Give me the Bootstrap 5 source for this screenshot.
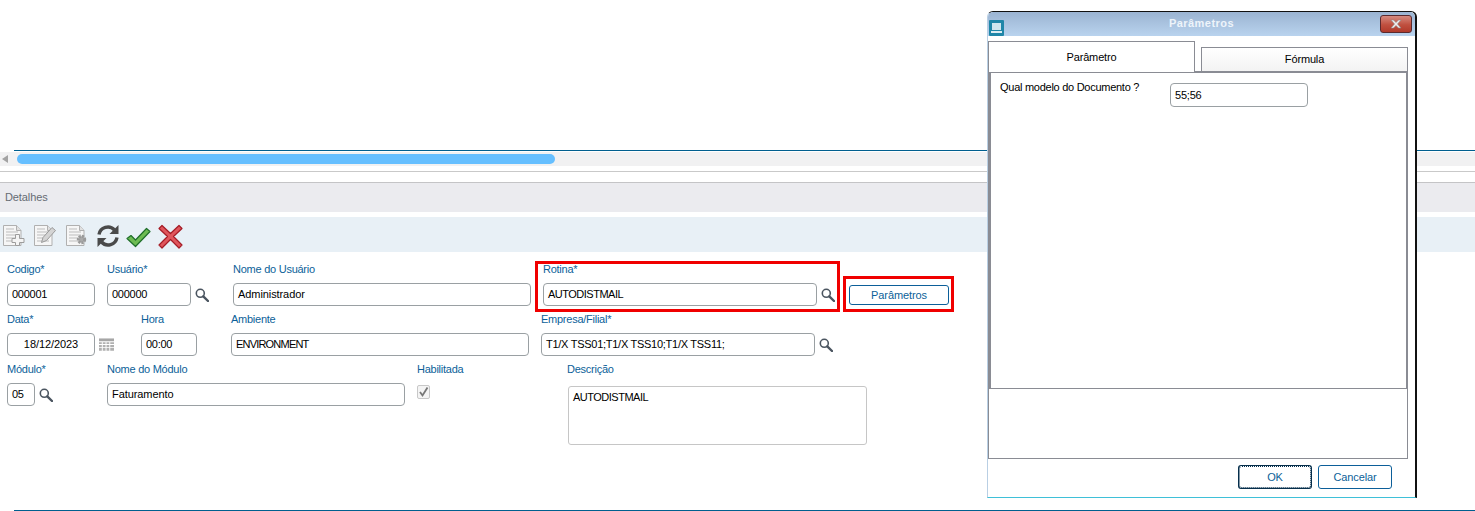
<!DOCTYPE html>
<html lang="pt">
<head>
<meta charset="utf-8">
<title>Detalhes</title>
<link rel="stylesheet" href="https://cdn.jsdelivr.net/npm/bootstrap@5.3.0/dist/css/bootstrap.min.css">
<style>
html,body{height:511px;overflow:hidden;background:#fff}
body{font-family:"Liberation Sans",Arial,sans-serif;font-size:11px;color:#000;position:relative}
.gap-top{height:150px}
.blue-rule{height:1px;margin-left:14px;background:#005f8f}
.scroll-track{height:14px;margin-top:1px;background:#f1f1f2;padding:2px 0 2px 17px;position:relative}
.scroll-arrow{position:absolute;left:2px;top:3px;width:0;height:0;border-style:solid;border-width:4px 6px 4px 0;border-color:transparent #a3a3a3 transparent transparent}
.scroll-thumb{width:538px;height:10px;background:#66bfff;border-radius:5px}
.grey-rule{height:1px;background:#c9c9c9;margin-top:5px}
.details-head{margin-top:10px;height:30px;background:#ebebef;border-top:1px solid #c4c4c6;color:#666b73;padding-left:5px;line-height:29px;letter-spacing:-.1px}
.tools{margin-top:5px;height:35px;background:#e8f0f6;padding:8px 0 0 3px}
.tools svg{display:block;flex:none}
.tool-gap1{margin-left:9px}.tool-gap2{margin-left:10px}.tool-gap3{margin-left:8px;margin-top:-1px}.tool-gap4{margin-left:6px;margin-top:2px}.tool-gap5{margin-left:7px;margin-top:-1px}
.form-zone{padding-top:9px;height:258px}
.frow{height:50px}
.fld{flex:none}
.fld-label{display:block;color:#0c5f99;height:22px;line-height:16px;white-space:nowrap;margin:0;letter-spacing:-.25px}
.fld-box{height:23px;border:1px solid #9aa0a3;border-radius:4px;background:#fff;padding:0 4px;line-height:21px;white-space:nowrap;color:#000;font-size:11px;width:100%;display:block;letter-spacing:-.27px}
.fld-line{display:flex;align-items:center}
.fld-line svg{flex:none}
.mag{margin-left:4px}
.w88{width:88px}.w84{width:84px}.w28{width:28px}
.tight-a{letter-spacing:-.5px}
.tight-b{letter-spacing:-.8px}
.tight-c{letter-spacing:-.08px}
.f-codigo{margin-left:7px;width:88px}
.f-usuario{margin-left:12px;width:104px}
.f-nome{margin-left:22px;width:298px}
.f-rotina{margin-left:12px;width:296px}
.rot-box{width:274px}
.f-btn{margin-left:10px;padding-top:24px}
.param-btn{width:100px;height:20px;padding:0;font-size:11px;line-height:18px;color:#0c5f99;background:#fff;border:1px solid #0c5f99;border-radius:3px;display:block;letter-spacing:-.1px}
.f-data{margin-left:7px;width:107px}
.f-hora{margin-left:27px;width:56px}
.f-amb{margin-left:34px;width:298px}
.f-emp{margin-left:12px;width:296px}
.f-mod{margin-left:7px;width:48px}
.f-nmod{margin-left:52px;width:298px}
.f-hab{margin-left:12px;width:100px}
.f-desc{margin-left:50px;width:300px}
.center-val{text-align:center}
.tick-box{width:13px;height:14px;border:1px solid #c8c8c8;background:#f4f4f4;border-radius:2px;display:block;margin-top:2px}
.desc-box{height:59px;border:1px solid #c6c6c6;border-radius:3px;padding:4px;margin-top:3px;line-height:13px;width:299px;margin-left:1px;letter-spacing:-.5px}
.end-rule{position:absolute;left:14px;right:0;top:510px;height:1px;background:#005f8f}
.hl{position:absolute;border:3px solid #f00000;pointer-events:none}
.hl-a{left:535px;top:261px;width:305px;height:51px}
.hl-b{left:843px;top:276px;width:111px;height:36px}
.dlg{position:absolute;left:987px;top:11px;width:430px;height:487px;background:#fff;border:solid #111;border-width:1px 2px 0 0;border-top-left-radius:6px;border-top-right-radius:6px;border-bottom:1px solid #3fc0d8;border-left:1px solid #b9cfe4}
.dlg-title{height:24px;background:linear-gradient(#9bb4d2,#b9d3ee);border-top-left-radius:5px;border-top-right-radius:5px;position:relative;text-align:center;color:#eef4fa;font-weight:700;line-height:23px;letter-spacing:.45px}
.dlg-ico{position:absolute;left:1px;top:8px;width:15px;height:16px;background:#1f86a8;border-radius:1px}
.dlg-ico i{position:absolute;left:3px;top:3px;width:9px;height:7px;background:#cfe6ef;display:block}
.dlg-ico b{position:absolute;left:2px;top:11px;width:11px;height:2px;background:#dcecf2;display:block}
.dlg-x{position:absolute;right:3px;top:3px;width:32px;height:18px;border:1px solid #5a2a2e;border-radius:3px;background:linear-gradient(#d58a80,#c0503f 55%,#b03a2b);display:flex;align-items:center;justify-content:center}
.dlg-tabs{height:36px;padding-top:5px;align-items:flex-end}
.dtab{width:207px;text-align:center;flex:none;letter-spacing:-.15px}
.dtab-on{height:31px;border:1px solid #8a8c94;border-bottom:0;line-height:30px;background:#fff;position:relative;z-index:1}
.dtab-off{height:25px;margin-left:6px;border:1px solid #8a8c94;border-bottom:0;line-height:23px;background:linear-gradient(#fff,#f3f3f3)}
.dlg-outer{height:388px;border:1px solid #8a8c94;border-top:0;width:420px}
.dlg-panel{height:318px;border:2px solid #8a8c94;border-bottom:1px solid #8a8c94;padding:7px 9px;position:relative;margin-top:-1px;width:419px}
.dlg-q{display:flex;justify-content:space-between;width:308px}
.dlg-q-label{margin-top:-1px;letter-spacing:-.27px;height:16px}
.dlg-q-box{width:138px;height:24px;border:1px solid #9aa0a3;border-radius:4px;padding:0 4px;line-height:22px;margin-top:3px;letter-spacing:-.2px}
.dlg-foot{padding:6px 23px 0 0;gap:6px}
.foot-btn{width:74px;height:24px;padding:0;font-size:11px;line-height:22px;color:#0c5f99;background:#fff;border:1px solid #0c5f99;border-radius:3px;letter-spacing:-.1px}
.foot-ok{border:2px solid #062f4c;outline:1px dotted #fff;outline-offset:-2px;line-height:20px}
</style>
</head>
<body>
<svg width="0" height="0" class="position-absolute">
<defs>
<symbol id="mag" viewBox="0 0 14 14"><circle cx="5.3" cy="5.3" r="4" fill="#fff" stroke="#4b5560" stroke-width="1.6"/><path d="M8.3 8.3 13 13" stroke="#4b5560" stroke-width="2.4" stroke-linecap="round"/></symbol>
<symbol id="doc" viewBox="0 0 22 21"><path d="M.5.5h13l4.500 5v15H.5z" fill="#f6f6f6" stroke="#b0b0b0"/><path d="M13.500.5v5H18" fill="#e0e0e0" stroke="#b0b0b0"/><path d="M3 4h8M3 7h12M3 10h12M3 13h12M3 16h12" stroke="#bdbdbd"/></symbol>
</defs>
</svg>

<div class="gap-top"></div>
<div class="blue-rule"></div>
<div class="scroll-track"><span class="scroll-arrow"></span><div class="scroll-thumb"></div></div>
<div class="grey-rule"></div>
<div class="details-head">Detalhes</div>

<div class="tools d-flex">
  <svg width="22" height="21"><use href="#doc"/><path d="M12.500 9.500h4v4h4.500v4h-4.500v3h-4v-3H9v-4h3.500z" fill="#f4f4f4" stroke="#9c9c9c"/></svg>
  <svg class="tool-gap1" width="22" height="21"><use href="#doc"/><path d="M7.500 17.500l1.500-5L18 2.500l3.500 3-9 10z" fill="#d4d4d4" stroke="#9a9a9a"/></svg>
  <svg class="tool-gap2" width="22" height="21"><use href="#doc"/><circle cx="15.500" cy="14.500" r="3.200" fill="#aaa" stroke="#9a9a9a" stroke-width="3" stroke-dasharray="2 1"/></svg>
  <svg class="tool-gap3" width="24" height="24" viewBox="0 0 24 24"><path d="M3 10.500A9 9 0 0 1 18.500 6" fill="none" stroke="#4a4a4a" stroke-width="3.400"/><path d="M22.500 1v9h-9z" fill="#4a4a4a"/><path d="M21 13.500A9 9 0 0 1 5.500 18" fill="none" stroke="#4a4a4a" stroke-width="3.400"/><path d="M1.500 23v-9h9z" fill="#4a4a4a"/></svg>
  <svg class="tool-gap4" width="25" height="21" viewBox="0 0 25 21"><path d="M1 11.500 5 8.500l4.500 4.500L20.500 1.500l3.500 3L9.500 19.500z" fill="#6dbb52" stroke="#1f6e2a" stroke-width="1.200" stroke-linejoin="round"/></svg>
  <svg class="tool-gap5" width="25" height="25" viewBox="0 0 25 25"><path d="M4 1.500 12.500 9.500 21 1.500l3 3-8.500 8 8.500 8.500-3 3-8.500-8.500L4 24l-3-3 8.500-8.500L1 4.500z" fill="#e0565c" stroke="#a51c26" stroke-width="1.200" stroke-linejoin="round"/></svg>
</div>

<div class="form-zone">
  <div class="frow d-flex">
    <div class="fld f-codigo"><label class="fld-label">Codigo*</label><div class="fld-box">000001</div></div>
    <div class="fld f-usuario"><label class="fld-label">Usuário*</label><div class="fld-line"><div class="fld-box w84">000000</div><svg class="mag" width="14" height="14"><use href="#mag"/></svg></div></div>
    <div class="fld f-nome"><label class="fld-label">Nome do Usuário</label><div class="fld-box tight-c">Administrador</div></div>
    <div class="fld f-rotina"><label class="fld-label">Rotina*</label><div class="fld-line"><div class="fld-box rot-box tight-a">AUTODISTMAIL</div><svg class="mag" width="14" height="14"><use href="#mag"/></svg></div></div>
    <div class="fld f-btn"><button type="button" class="btn param-btn">Parâmetros</button></div>
  </div>
  <div class="frow d-flex">
    <div class="fld f-data"><label class="fld-label">Data*</label><div class="fld-line"><div class="fld-box w88 center-val tight-c">18/12/2023</div><svg class="mag" width="15" height="14" viewBox="0 0 16 14"><path d="M0 0h16v3H0z" fill="#a6a6a6"/><path d="M0 4h3v2H0zM4 4h3v2H4zM8 4h3v2H8zM12 4h4v2h-4zM0 7h3v2H0zM4 7h3v2H4zM8 7h3v2H8zM12 7h4v2h-4zM0 10h3v3H0zM4 10h3v3H4zM8 10h3v3H8zM12 10h4v3h-4z" fill="#b0b0b0"/></svg></div></div>
    <div class="fld f-hora"><label class="fld-label">Hora</label><div class="fld-box">00:00</div></div>
    <div class="fld f-amb"><label class="fld-label">Ambiente</label><div class="fld-box tight-b">ENVIRONMENT</div></div>
    <div class="fld f-emp"><label class="fld-label">Empresa/Filial*</label><div class="fld-line"><div class="fld-box rot-box">T1/X TSS01;T1/X TSS10;T1/X TSS11;</div><svg class="mag" width="14" height="14"><use href="#mag"/></svg></div></div>
  </div>
  <div class="frow d-flex">
    <div class="fld f-mod"><label class="fld-label">Módulo*</label><div class="fld-line"><div class="fld-box w28">05</div><svg class="mag" width="14" height="14"><use href="#mag"/></svg></div></div>
    <div class="fld f-nmod"><label class="fld-label">Nome do Módulo</label><div class="fld-box tight-c">Faturamento</div></div>
    <div class="fld f-hab"><label class="fld-label">Habilitada</label><span class="tick-box"><svg width="11" height="12" viewBox="0 0 11 12" class="d-block"><path d="M2 6l2.500 3.500L9.500 1.500" fill="none" stroke="#777" stroke-width="1.800"/></svg></span></div>
    <div class="fld f-desc"><label class="fld-label">Descrição</label><div class="desc-box">AUTODISTMAIL</div></div>
  </div>
</div>

<div class="end-rule"></div>
<div class="hl hl-a"></div>
<div class="hl hl-b"></div>

<div class="dlg">
  <div class="dlg-title">Parâmetros
    <span class="dlg-ico"><i></i><b></b></span>
    <span class="dlg-x"><svg width="14" height="10" viewBox="0 0 14 10"><path d="M2 1h2.500L7 3.500 9.500 1H12L8.500 5 12 9H9.500L7 6.500 4.500 9H2l3.500-4z" fill="#eee" stroke="#8a8a8a" stroke-width=".6"/></svg></span>
  </div>
  <div class="dlg-tabs d-flex">
    <div class="dtab dtab-on">Parâmetro</div>
    <div class="dtab dtab-off">Fórmula</div>
  </div>
  <div class="dlg-outer">
    <div class="dlg-panel">
      <div class="dlg-q"><div class="dlg-q-label">Qual modelo do Documento ?</div><div class="dlg-q-box">55;56</div></div>
    </div>
  </div>
  <div class="dlg-foot d-flex justify-content-end">
    <button type="button" class="btn foot-btn foot-ok">OK</button>
    <button type="button" class="btn foot-btn">Cancelar</button>
  </div>
</div>
<script src="https://cdn.jsdelivr.net/npm/bootstrap@5.3.0/dist/js/bootstrap.bundle.min.js"></script>
</body>
</html>
